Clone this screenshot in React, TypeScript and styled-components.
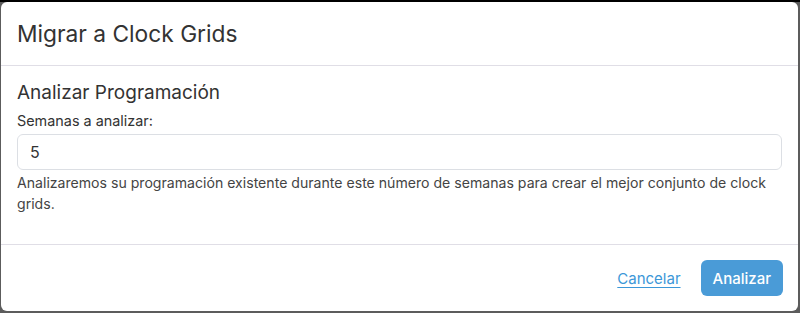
import styled, { createGlobalStyle } from 'styled-components';

const GlobalStyle = createGlobalStyle`
  html, body {
    margin: 0;
    padding: 0;
  }
  body {
    background: linear-gradient(#000 0, #000 2px, #5c5c5c 2px);
    font-family: Inter, "Noto Sans", "Liberation Sans", sans-serif;
    color: #333;
    height: 313px;
    overflow: hidden;
  }
`;

export default function App() {
  return (
    <>
      <GlobalStyle />
      <Backdrop>
        <Modal>
          <Header>
            <Title>Migrar a Clock Grids</Title>
          </Header>
          <Body>
            <SectionTitle>Analizar Programación</SectionTitle>
            <Label htmlFor="weeks">Semanas a analizar:</Label>
            <Input id="weeks" type="text" defaultValue="5" />
            <Help>
              Analizaremos su programación existente durante este número de semanas para crear el mejor conjunto de clock
              grids.
            </Help>
          </Body>
          <Footer>
            <LinkButton href="#">Cancelar</LinkButton>
            <PrimaryButton type="button">Analizar</PrimaryButton>
          </Footer>
        </Modal>
      </Backdrop>
    </>
  );
}

const Backdrop = styled.div`
  padding: 2px 1px 0 1px;
`;

const Modal = styled.div`
  width: 797px;
  height: 309px;
  background: #fff;
  border-radius: 6px;
  display: flex;
  flex-direction: column;
  box-sizing: border-box;
  overflow: hidden;
`;

const Header = styled.div`
  display: flex;
  align-items: center;
  height: 64px;
  padding: 0 16px;
  border-bottom: 1px solid #e0dee6;
  box-sizing: border-box;
`;

const Title = styled.h4`
  margin: 0;
  font-size: 22.75px;
  font-weight: 400;
  color: #333;
  line-height: 1.4;
`;

const Body = styled.div`
  flex: 1;
  padding: 13px 16px 0 16px;
  display: flex;
  flex-direction: column;
`;

const SectionTitle = styled.h5`
  margin: 0 0 3px 0;
  font-size: 19px;
  font-weight: 400;
  line-height: 28px;
  color: #333;
`;

const Label = styled.label`
  font-size: 14.4px;
  line-height: 21px;
  color: #333;
  margin-bottom: 3px;
`;

const Input = styled.input`
  height: 36px;
  box-sizing: border-box;
  border: 1px solid #dcdfe4;
  border-radius: 6px;
  padding: 0 12px;
  font-family: inherit;
  font-size: 16px;
  color: #333;
  outline: none;
`;

const Help = styled.p`
  margin: 2px 0 0 0;
  font-size: 14.1px;
  line-height: 21px;
  color: #444;
`;

const Footer = styled.div`
  display: flex;
  justify-content: flex-end;
  align-items: center;
  gap: 20px;
  height: 67px;
  padding: 0 15px 0 16px;
  border-top: 1px solid #e0dee6;
  box-sizing: border-box;
`;

const LinkButton = styled.a`
  font-size: 15px;
  color: #3c97d8;
  text-decoration: underline;
  text-underline-offset: 3px;
`;

const PrimaryButton = styled.button`
  height: 36px;
  padding: 0 12px;
  border: none;
  border-radius: 6px;
  background: #4a9bd7;
  color: #fff;
  font-family: inherit;
  font-size: 15px;
  font-weight: 500;
  cursor: pointer;
`;
